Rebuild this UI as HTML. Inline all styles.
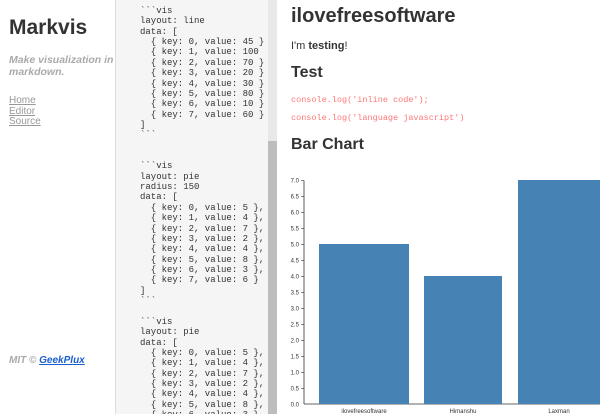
<!DOCTYPE html>
<html><head><meta charset="utf-8"><style>
*{margin:0;padding:0;box-sizing:border-box}
body{width:600px;height:417px;overflow:hidden;background:#fff;font-family:"Liberation Sans",sans-serif;position:relative}
.side{position:absolute;left:0;top:0;width:115px;height:417px;background:#fff}
.side h1{position:absolute;left:9px;top:16px;font-size:21px;color:#333;font-weight:bold}
.side .tag{position:absolute;left:9px;top:54px;font-size:10.5px;font-style:italic;font-weight:bold;color:#aaa;line-height:12px;width:120px;white-space:nowrap}
.side .nav{position:absolute;left:9px;top:96px;font-size:10px;line-height:10.5px;color:#999}
.side .nav div{text-decoration:underline}
.side .mit{position:absolute;left:9px;top:355px;font-size:10px;font-style:italic;font-weight:bold;color:#aaa}
.side .mit u{color:#1a5fd0}
.ed{position:absolute;left:115px;top:0;width:153px;height:414px;background:#f5f5f5;border-left:1px solid #ddd;overflow:hidden}
.ed pre{position:absolute;left:24px;top:6px;font-family:"Liberation Mono",monospace;font-size:9px;line-height:10.36px;color:#333}
.sb{position:absolute;left:268px;top:0;width:9px;height:414px;background:#e8e8e8}
.sb div{position:absolute;left:0;top:141px;width:9px;height:273px;background:#bdbdbd}
.pv{position:absolute;left:277px;top:0;width:323px;height:417px;background:#fff;color:#333}
.pv h1{position:absolute;left:14px;top:5px;font-size:20px;font-weight:bold}
.pv p{position:absolute;left:14px;top:40px;font-size:11px}
.pv h2{position:absolute;left:14px;font-size:16px;font-weight:bold}
.pv code{position:absolute;left:14px;font-family:"Liberation Mono",monospace;font-size:8.5px;color:#f77}
</style></head><body>
<div class="side">
<h1>Markvis</h1>
<div class="tag">Make visualization in<br>markdown.</div>
<div class="nav"><div>Home</div><div>Editor</div><div>Source</div></div>
<div class="mit">MIT © <u>GeekPlux</u></div>
</div>
<div class="ed"><pre>&#96;&#96;&#96;vis
layout: line
data: [
  { key: 0, value: 45 }
  { key: 1, value: 100
  { key: 2, value: 70 }
  { key: 3, value: 20 }
  { key: 4, value: 30 }
  { key: 5, value: 80 }
  { key: 6, value: 10 }
  { key: 7, value: 60 }
]
&#96;&#96;&#96;


&#96;&#96;&#96;vis
layout: pie
radius: 150
data: [
  { key: 0, value: 5 },
  { key: 1, value: 4 },
  { key: 2, value: 7 },
  { key: 3, value: 2 },
  { key: 4, value: 4 },
  { key: 5, value: 8 },
  { key: 6, value: 3 },
  { key: 7, value: 6 }
]
&#96;&#96;&#96;

&#96;&#96;&#96;vis
layout: pie
data: [
  { key: 0, value: 5 },
  { key: 1, value: 4 },
  { key: 2, value: 7 },
  { key: 3, value: 2 },
  { key: 4, value: 4 },
  { key: 5, value: 8 },
  { key: 6, value: 3 },</pre></div>
<div class="sb"><div></div></div>
<div class="pv">
<h1>ilovefreesoftware</h1>
<p>I'm <b>testing</b>!</p>
<h2 style="top:64px">Test</h2>
<code style="top:95px">console.log('inline code');</code>
<code style="top:113px">console.log('language javascript')</code>
<h2 style="top:136px">Bar Chart</h2>
</div>
<svg style="position:absolute;left:277px;top:170px" width="323" height="247" font-family="Liberation Sans" font-size="6" fill="#333">
<g stroke="#333" stroke-width="0.8">
<line x1="27" y1="10.5" x2="27" y2="234"/>
<line x1="27" y1="234" x2="323" y2="234"/>
</g>
<g text-anchor="end">
<text x="22" y="12.5">7.0</text><text x="22" y="28.5">6.5</text><text x="22" y="44.5">6.0</text><text x="22" y="60.5">5.5</text><text x="22" y="76.5">5.0</text><text x="22" y="92.5">4.5</text><text x="22" y="108.5">4.0</text><text x="22" y="124.5">3.5</text><text x="22" y="140.5">3.0</text><text x="22" y="156.5">2.5</text><text x="22" y="172.5">2.0</text><text x="22" y="188.5">1.5</text><text x="22" y="204.5">1.0</text><text x="22" y="220.5">0.5</text><text x="22" y="236.5">0.0</text>
</g>
<g stroke="#333" stroke-width="0.6">
<line x1="24" y1="10.5" x2="27" y2="10.5"/><line x1="24" y1="26.5" x2="27" y2="26.5"/><line x1="24" y1="42.5" x2="27" y2="42.5"/><line x1="24" y1="58.5" x2="27" y2="58.5"/><line x1="24" y1="74.5" x2="27" y2="74.5"/><line x1="24" y1="90.5" x2="27" y2="90.5"/><line x1="24" y1="106.5" x2="27" y2="106.5"/><line x1="24" y1="122.5" x2="27" y2="122.5"/><line x1="24" y1="138.5" x2="27" y2="138.5"/><line x1="24" y1="154.5" x2="27" y2="154.5"/><line x1="24" y1="170.5" x2="27" y2="170.5"/><line x1="24" y1="186.5" x2="27" y2="186.5"/><line x1="24" y1="202.5" x2="27" y2="202.5"/><line x1="24" y1="218.5" x2="27" y2="218.5"/>
</g>
<rect x="42" y="74" width="90" height="160" fill="#4682b4"/>
<rect x="147" y="106" width="78" height="128" fill="#4682b4"/>
<rect x="241" y="10" width="82" height="224" fill="#4682b4"/>
<g text-anchor="middle">
<text x="87" y="243">ilovefreesoftware</text><text x="186" y="243">Himanshu</text><text x="282" y="243">Laxman</text>
</g>
</svg>
</body></html>
